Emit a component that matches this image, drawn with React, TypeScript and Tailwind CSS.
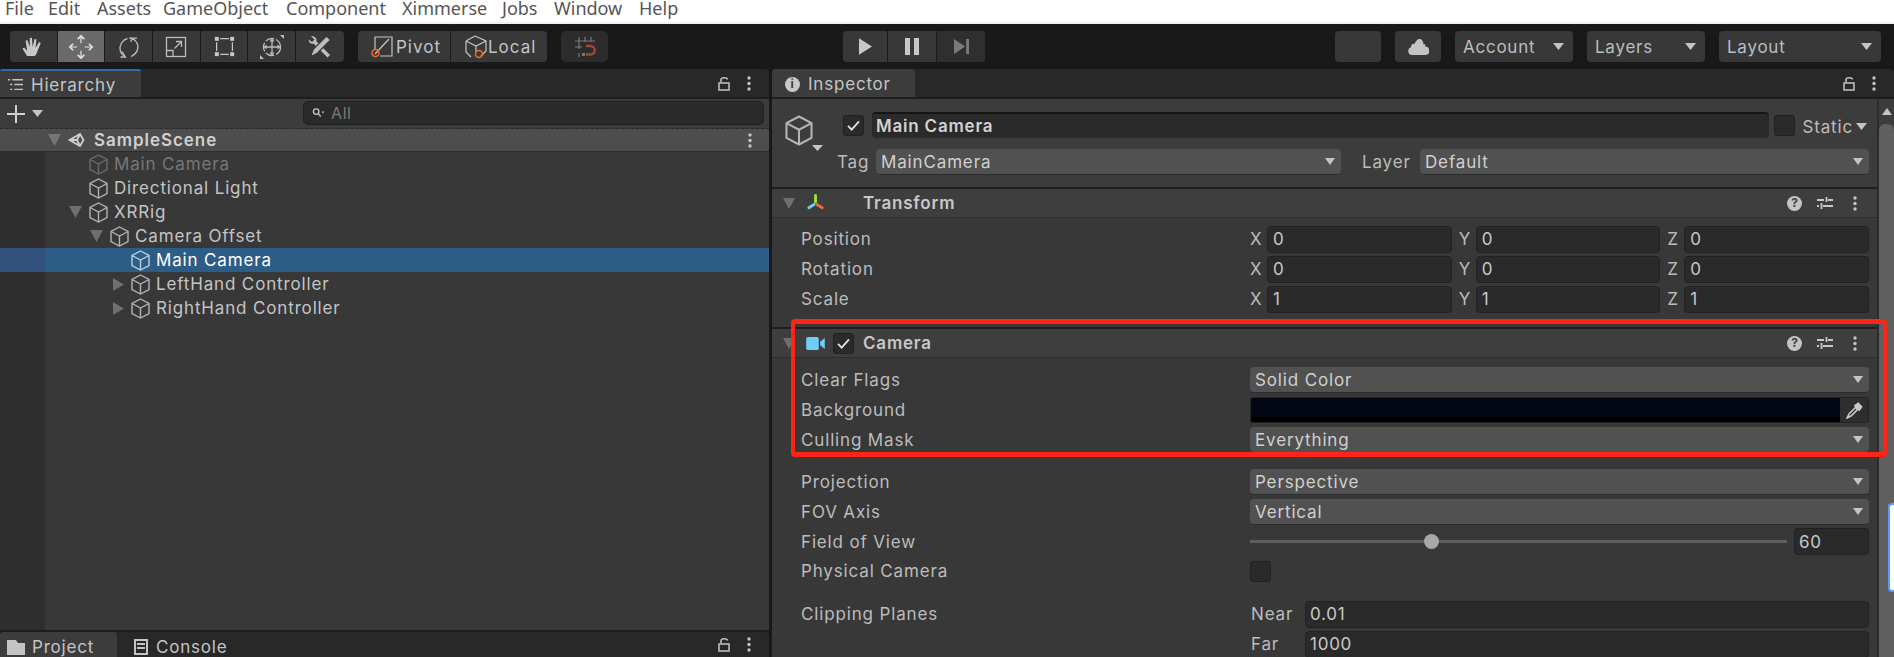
import type { ReactNode } from "react";

const MENU = [
  { label: "File", width: "w-[43px]" },
  { label: "Edit", width: "w-[49px]" },
  { label: "Assets", width: "w-[66px]" },
  { label: "GameObject", width: "w-[123px]" },
  { label: "Component", width: "w-[116px]" },
  { label: "Ximmerse", width: "w-[100px]" },
  { label: "Jobs", width: "w-[52px]" },
  { label: "Window", width: "w-[85px]" },
  { label: "Help", width: "w-[60px]" },
];

const Cube = ({ className = "w-[19px] h-[21px] text-[#b4b4b4]" }: { className?: string }) => (
  <svg viewBox="0 0 19 21" fill="none" stroke="currentColor" strokeWidth="1.4" className={className}>
    <path d="M9.5 1 18 5.5v10L9.5 20 1 15.5v-10L9.5 1Z" />
    <path d="M1 5.5 9.5 10 18 5.5M9.5 10v10" />
  </svg>
);

const Triangle = ({ dir = "down", className = "" }: { dir?: "down" | "right"; className?: string }) => (
  <svg viewBox="0 0 12 12" preserveAspectRatio="none" className={className} fill="currentColor">
    {dir === "down" ? <path d="M0 0h12L6 12Z" /> : <path d="M0 0v12l12-6Z" />}
  </svg>
);

const Lock = () => (
  <svg viewBox="0 0 12 15" className="w-[12px] h-[15px] text-[#c4c4c4]" fill="none" stroke="currentColor" strokeWidth="1.5">
    <path d="M3 6V3.5C3 1 9.5 1 9.5 3.5" />
    <rect x="1" y="7" width="10" height="7" />
  </svg>
);

const Dots = () => (
  <svg viewBox="0 0 4 15" className="w-[4px] h-[15px] text-[#c4c4c4]" fill="currentColor">
    <circle cx="2" cy="2" r="1.7" />
    <circle cx="2" cy="7.5" r="1.7" />
    <circle cx="2" cy="13" r="1.7" />
  </svg>
);

const Check = () => (
  <svg viewBox="0 0 14 12" className="w-[13px] h-[11px] text-[#e0e0e0]" fill="none" stroke="currentColor" strokeWidth="2">
    <path d="M1 6.5 5 10.5 13 1.5" />
  </svg>
);

const Checkbox = ({ checked = false, className = "" }: { checked?: boolean; className?: string }) => (
  <div className={`w-[21px] h-[21px] shrink-0 rounded-[3px] bg-[#2a2a2a] border border-[#212121] flex items-center justify-center ${className}`}>
    {checked && <Check />}
  </div>
);

const ToolButton = ({ children, active, last }: { children: ReactNode; active?: boolean; last?: boolean }) => (
  <div className={`w-[47.7px] h-full flex items-center justify-center ${active ? "bg-[#6a6a6a]" : ""} ${last ? "" : "border-r border-[#191919]"}`}>
    {children}
  </div>
);

const ToolIcon = ({ children }: { children: ReactNode }) => (
  <svg viewBox="0 0 24 24" className="w-[24px] h-[24px] text-[#bdbdbd]" fill="none" stroke="currentColor" strokeWidth="1.3">
    {children}
  </svg>
);

const TopDropdown = ({ label, width }: { label: string; width: string }) => (
  <div className={`${width} h-[31px] rounded-[4px] bg-[#383838] flex items-center justify-between pl-[8px] pr-[9px] text-[17px] tracking-[0.75px] text-[#bdbdbd]`}>
    <span className="pt-[2px]">{label}</span>
    <Triangle className="w-[11px] h-[7px] text-[#c4c4c4]" />
  </div>
);

const TreeRow = ({
  label,
  indent,
  arrow,
  selected,
  dim,
}: {
  label: string;
  indent: string;
  arrow?: "down" | "right";
  selected?: boolean;
  dim?: boolean;
}) => (
  <div className={`relative h-[24px] flex items-center ${indent} ${selected ? "bg-[#2c5d87] text-white" : dim ? "text-[#777777]" : "text-[#c4c4c4]"}`}>
    {selected && <div className="absolute left-0 top-0 w-[45px] h-full bg-[#34527e]" />}
    {arrow === "down" && <Triangle className="w-[13px] h-[12px] mr-[7px] -ml-[20px] text-[#6f6f6f]" />}
    {arrow === "right" && <Triangle dir="right" className="w-[11px] h-[13px] mr-[7px] -ml-[18px] text-[#6f6f6f]" />}
    <Cube className={`relative w-[19px] h-[21px] mr-[6px] ${selected ? "text-[#bcd0e0]" : dim ? "text-[#6b6b6b]" : "text-[#b4b4b4]"}`} />
    <span className="relative text-[17px] tracking-[0.85px] leading-none">{label}</span>
  </div>
);

const Field = ({ axis, value }: { axis: string; value: string }) => (
  <div className="flex-1 flex items-center min-w-0">
    <span className="w-[17px] shrink-0 pt-[2px] text-[17px]">{axis}</span>
    <div className="flex-1 h-[27px] rounded-[4px] bg-[#2a2a2a] border border-[#212121] flex items-center pl-[5px] pt-[2px] text-[#c8c8c8] text-[17px] tracking-[0.75px]">
      {value}
    </div>
  </div>
);

const Dropdown = ({ value, className = "" }: { value: string; className?: string }) => (
  <div className={`h-[26px] rounded-[4px] bg-[#515151] border-b border-[#2c2c2c] flex items-center justify-between pl-[5px] pr-[4px] text-[17px] tracking-[0.85px] text-[#d0d0d0] ${className}`}>
    <span className="pt-[2px]">{value}</span>
    <Triangle className="w-[10px] h-[7px] text-[#c4c4c4] mr-[2px]" />
  </div>
);

const Row = ({ label, height = "h-[30px]", children }: { label: string; height?: string; children?: ReactNode }) => (
  <div className={`${height} flex items-center pl-[29px] pr-[8px]`}>
    <span className="w-[449px] shrink-0 pt-[2px] text-[17px] tracking-[0.85px] text-[#bcbcbc]">{label}</span>
    <div className="flex-1 flex items-center min-w-0">{children}</div>
  </div>
);

const ComponentHeader = ({ icon, checkbox, title }: { icon: ReactNode; checkbox?: boolean; title: string }) => (
  <div className="h-[31px] border-t-2 border-[#1f1f1f] bg-[#3e3e3e] border-b border-b-[#2e2e2e] flex items-center pl-[11px] pr-[20px]">
    <Triangle className="w-[12px] h-[11px] text-[#6f6f6f] mr-[11px]" />
    <div className="w-[19px] flex justify-center">{icon}</div>
    {checkbox ? <Checkbox checked className="ml-[8px] mr-[9px]" /> : <div className="w-[38px]" />}
    <span className="pt-[2px] text-[17px] font-semibold tracking-[0.8px] text-[#c8c8c8]">{title}</span>
    <div className="ml-auto flex items-center">
      <div className="w-[15px] h-[15px] rounded-full bg-[#c4c4c4] text-[#3e3e3e] text-[12px] font-bold flex items-center justify-center">?</div>
      <svg viewBox="0 0 16 14" className="ml-[15px] w-[16px] h-[14px] text-[#c8c8c8]" fill="none" stroke="currentColor" strokeWidth="1.8">
        <path d="M0 4h7M11 4h5M9.5 1v5M0 10h2M6 10h10M4.5 7v6" />
      </svg>
      <div className="ml-[20px] flex">
        <Dots />
      </div>
    </div>
  </div>
);

const TabBar = ({ children, className = "" }: { children: ReactNode; className?: string }) => (
  <div className={`h-[28px] bg-[#282828] rounded-t-[4px] flex items-stretch ${className}`}>
    {children}
    <div className="ml-auto flex items-center gap-[17px] pr-[18px]">
      <Lock />
      <Dots />
    </div>
  </div>
);

const NumberInput = ({ value, className = "flex-1" }: { value: string; className?: string }) => (
  <div className={`${className} h-[27px] rounded-[4px] bg-[#2a2a2a] border border-[#212121] flex items-center pl-[4px] pt-[2px] text-[17px] tracking-[0.75px] text-[#c8c8c8]`}>
    {value}
  </div>
);

export default function App() {
  return (
    <div className="w-[1894px] h-[657px] overflow-hidden relative bg-[#191919] font-['Inter',sans-serif]">
      {/* MENU */}
      <div className="h-[24px] bg-white border-b-2 border-[#f0f0f0] flex items-start pl-[5px]">
        {MENU.map((m) => (
          <span key={m.label} className={`${m.width} shrink-0 font-['Noto_Sans',sans-serif] text-[18px] leading-[16px] text-[#555555]`}>
            {m.label}
          </span>
        ))}
      </div>

      {/* TOOLBAR */}
      <div className="h-[45px] flex items-center pl-[10px] pr-[13px]">
        <div className="h-[31px] rounded-[4px] bg-[#383838] overflow-hidden flex w-[334px]">
          <ToolButton>
            <svg viewBox="0 0 24 24" className="w-[24px] h-[24px] text-[#c8c8c8]" fill="currentColor">
              <path d="M6 21 1.5 13.5l1.6-1 3 3.4L4.6 5.5l2-.3 2 7L8.800 3l2.200-.2.600 9.200L13.500 4l2 .4-1 8.600 3.500-6 1.800.9-3.300 8.100c-.6 2-1.500 4.100-3 5.100Z" />
            </svg>
          </ToolButton>
          <ToolButton active>
            <svg viewBox="0 0 28 28" className="w-[26px] h-[26px] text-[#e4e4e4]" fill="none" stroke="currentColor" strokeWidth="1.3">
              <path d="M14 2v8M14 18v8M2 14h8M18 14h8" />
              <path d="M10.500 5.500 14 2l3.500 3.500M10.500 22.500 14 26l3.500-3.500M5.500 10.500 2 14l3.500 3.500M22.500 10.500 26 14l-3.500 3.500" strokeWidth="1.800" />
            </svg>
          </ToolButton>
          <ToolButton>
            <ToolIcon>
              <path d="M8 21.500C3 19 1.500 13 4.500 8 6 5.500 8.500 4 10.500 3.500" />
              <path d="M13.500 3C19 4.500 22 9 20.500 14.500c-.8 3-3 5.500-6.500 7" />
              <path d="M12 3.200h8M16 3.200l-2.500 3.500" />
              <path d="M5 16.500l3.500 5.500h-5" />
            </ToolIcon>
          </ToolButton>
          <ToolButton>
            <ToolIcon>
              <rect x="2.500" y="2.500" width="19" height="19" />
              <path d="M2.500 15.500h6.500v6M10.500 13.500l7-7M12 6.500h5.500v5.500" />
            </ToolIcon>
          </ToolButton>
          <ToolButton>
            <svg viewBox="0 0 24 24" className="w-[21px] h-[21px] text-[#c8c8c8]" fill="none" stroke="currentColor" strokeWidth="1.400">
              <path d="M7 3h10M7 21h10M3 7v10M21 7v10" />
              <g fill="currentColor" stroke="none">
                <rect x="1" y="1" width="4.500" height="4.500" />
                <rect x="18.500" y="1" width="4.500" height="4.500" />
                <rect x="1" y="18.500" width="4.500" height="4.500" />
                <rect x="18.500" y="18.500" width="4.500" height="4.500" />
              </g>
            </svg>
          </ToolButton>
          <ToolButton>
            <ToolIcon>
              <circle cx="12" cy="12" r="8.500" strokeDasharray="9 2" />
              <path d="M12 5v14M5 12h14" />
              <path d="M12 3.500l2.500 3h-5ZM12 20.500l2.500-3h-5ZM3.500 12l3-2.500v5ZM20.500 12l-3-2.500v5Z" fill="currentColor" stroke="none" />
              <path d="M0 24v-4l4 4ZM24 0v4l-4-4Z" fill="currentColor" stroke="none" />
            </ToolIcon>
          </ToolButton>
          <ToolButton last>
            <svg viewBox="0 0 24 24" className="w-[24px] h-[24px] text-[#bdbdbd]" fill="currentColor">
              <path d="M3 1.500c2.500-1 5 .5 5.500 3 .1.700 0 1.200-.2 1.700L22 20l-2.500 2.500L5.800 8.800C3 9.500.6 7.500.7 4.500L4 7l2.500-2.500Z" />
              <path d="M18.500 1 22.500 5 9.500 18 4 21l-1-1 2.500-6Z" stroke="#383838" strokeWidth="1.200" />
            </svg>
          </ToolButton>
        </div>

        <div className="ml-[14px] h-[31px] w-[189px] rounded-[4px] bg-[#383838] flex text-[17px] tracking-[1px] text-[#c4c4c4]">
          <div className="w-[93px] flex items-center pl-[13px] border-r border-[#191919]">
            <svg viewBox="0 0 22 22" className="w-[22px] h-[22px] mr-[3px]" fill="none" strokeWidth="1.200">
              <path d="M4 14V1h17v19H9M4 18 18 3" stroke="#c4c4c4" />
              <circle cx="4.500" cy="17" r="3.500" stroke="#ef6a2e" strokeWidth="1.500" />
            </svg>
            <span className="pt-[2px]">Pivot</span>
          </div>
          <div className="flex-1 flex items-center pl-[13px]">
            <svg viewBox="0 0 24 24" className="w-[24px] h-[24px]" fill="none" strokeWidth="1.200">
              <path d="M11 1 22 6v10l-5 5M2 6l9-5M2 6v11l5 5M2 6l10 5 10-5M12 11v6" stroke="#c4c4c4" />
              <circle cx="15" cy="19" r="3.500" stroke="#ef6a2e" strokeWidth="1.500" />
            </svg>
            <span className="pt-[2px]">Local</span>
          </div>
        </div>

        <div className="ml-[14px] h-[31px] w-[47px] rounded-[5px] bg-[#2c2c2c] flex items-center justify-center">
          <svg viewBox="0 0 22 22" className="w-[22px] h-[22px]" fill="none" strokeWidth="1.200">
            <path d="M5 1v12M11 1v5M17 1v5M1 5h20M1 11h7M5 17v4" stroke="#777777" />
            <path d="M12 10h4.500a4.200 4.200 0 0 1 0 8.500H12" stroke="#a5472a" strokeWidth="2.400" />
            <path d="M8 17h3v3H8Z" fill="#777777" stroke="none" />
          </svg>
        </div>

        <div className="ml-[235px] h-[31px] w-[142px] rounded-[4px] bg-[#383838] flex">
          <div className="w-[45px] border-r border-[#191919] flex items-center justify-center">
            <svg viewBox="0 0 14 18" className="w-[13px] h-[17px] text-[#c8c8c8]" fill="currentColor">
              <path d="M0 0l14 9-14 9Z" />
            </svg>
          </div>
          <div className="w-[49px] border-r border-[#191919] flex items-center justify-center gap-[4px]">
            <div className="w-[5px] h-[17px] bg-[#c8c8c8]" />
            <div className="w-[5px] h-[17px] bg-[#c8c8c8]" />
          </div>
          <div className="flex-1 flex items-center justify-center bg-[#2f2f2f] rounded-r-[4px]">
            <svg viewBox="0 0 16 16" className="w-[15px] h-[15px] text-[#7a7a7a]" fill="currentColor">
              <path d="M0 0l12 8-12 8ZM13 0h3v16h-3Z" />
            </svg>
          </div>
        </div>

        <div className="ml-auto flex items-center">
          <div className="w-[46px] h-[31px] rounded-[4px] bg-[#383838]" />
          <div className="ml-[14px] w-[46px] h-[31px] rounded-[4px] bg-[#383838] flex items-center justify-center">
            <svg viewBox="0 0 21 16" className="w-[21px] h-[16px] text-[#c4c4c4]" fill="currentColor">
              <path d="M4 16a4 4 0 0 1-1-7.800C3.300 5 5 4.500 6.500 5 7.500 2 9.500 0 11.500 0c2.500 0 4 2.500 4 5.500 0-.5 1-.5 1.500 0 .5.500.5 1.500 0 2A4.300 4.300 0 0 1 18 16Z" />
            </svg>
          </div>
          <TopDropdown label="Account" width="ml-[14px] w-[118px]" />
          <TopDropdown label="Layers" width="ml-[14px] w-[118px]" />
          <TopDropdown label="Layout" width="ml-[14px] w-[162px]" />
        </div>
      </div>

      {/* PANELS */}
      <div className="flex h-[588px]">
        {/* LEFT COLUMN */}
        <div className="w-[769px] shrink-0 flex flex-col">
          <TabBar>
            <div className="w-[141px] bg-[#3c3c3c] border-t-2 border-[#2f6ba5] flex items-center pl-[8px] text-[17px] tracking-[0.8px] text-[#c4c4c4] rounded-t-[2px]">
              <svg viewBox="0 0 14 12" className="w-[15px] h-[13px] mr-[8px] text-[#c4c4c4]" fill="none" stroke="currentColor" strokeWidth="1.300">
                <path d="M0 1.500h2M4 1.500h10M2 6h2M6 6h8M2 10.500h2M6 10.500h8" />
              </svg>
              <span className="pt-[3px]">Hierarchy</span>
            </div>
          </TabBar>
          <div className="h-[2px] bg-[#1e1e1e]" />
          <div className="h-[30px] bg-[#3c3c3c] flex items-center pr-[5px] border-b border-dashed border-[#2a2a2a]">
            <svg viewBox="0 0 18 18" className="ml-[7px] w-[18px] h-[18px] text-[#d0d0d0]" fill="none" stroke="currentColor" strokeWidth="2">
              <path d="M9 0v18M0 9h18" />
            </svg>
            <Triangle className="ml-[7px] w-[11px] h-[7px] text-[#c4c4c4]" />
            <div className="ml-[260px] flex-1 h-[24px] -mt-[2px] rounded-[5px] bg-[#2a2a2a] border border-[#212121] flex items-center pl-[7px] text-[16px] tracking-[0.6px] text-[#7b7b7b]">
              <svg viewBox="0 0 14 12" className="w-[14px] h-[11px] mr-[6px] text-[#c4c4c4]" fill="none" stroke="currentColor" strokeWidth="1.500">
                <circle cx="5" cy="5" r="3" />
                <path d="M7.500 7.500 10 10.500" />
                <path d="M11 5h3l-1.500 2Z" fill="currentColor" stroke="none" />
              </svg>
              All
            </div>
          </div>
          <div className="h-[23px] bg-[#4d4d4d] flex items-center pl-[48px] pr-[17px] border-b border-[#2c2c2c]">
            <Triangle className="w-[13px] h-[12px] text-[#757575]" />
            <svg viewBox="0 0 18 18" className="ml-[7px] w-[18px] h-[18px] text-[#d0d0d0]" fill="none" stroke="currentColor" strokeWidth="1.800">
              <path d="M1.500 9 12 3l3.500 6-3.500 6ZM12 3l-3 6 3 6M9 9H1.500" />
            </svg>
            <span className="ml-[8px] pt-[2px] text-[17px] font-semibold tracking-[0.95px] text-[#d0d0d0]">SampleScene</span>
            <div className="ml-auto flex">
              <Dots />
            </div>
          </div>
          <div className="flex-1 bg-[#383838] relative">
            <div className="absolute left-0 top-0 bottom-0 w-[45px] bg-[#2e2e2e]" />
            <div className="relative">
              <TreeRow label="Main Camera" indent="pl-[89px]" dim />
              <TreeRow label="Directional Light" indent="pl-[89px]" />
              <TreeRow label="XRRig" indent="pl-[89px]" arrow="down" />
              <TreeRow label="Camera Offset" indent="pl-[110px]" arrow="down" />
              <TreeRow label="Main Camera" indent="pl-[131px]" selected />
              <TreeRow label="LeftHand Controller" indent="pl-[131px]" arrow="right" />
              <TreeRow label="RightHand Controller" indent="pl-[131px]" arrow="right" />
            </div>
          </div>
          <div className="h-[2px] bg-[#1e1e1e]" />
          <TabBar className="!h-[25px]">
            <div className="w-[117px] bg-[#3c3c3c] flex items-center pl-[7px] pt-[5px] text-[17px] tracking-[0.8px] text-[#c4c4c4] rounded-t-[3px]">
              <svg viewBox="0 0 18 15" className="w-[18px] h-[15px] mr-[7px] text-[#c4c4c4]" fill="currentColor">
                <path d="M0 0h9l2 3h7v12H0Z" />
              </svg>
              <span className="pt-[2px]">Project</span>
            </div>
            <div className="flex items-center pl-[17px] pt-[5px] text-[17px] tracking-[0.8px] text-[#c4c4c4]">
              <svg viewBox="0 0 14 16" className="w-[14px] h-[16px] mr-[8px] text-[#c4c4c4]" fill="none" stroke="currentColor" strokeWidth="2">
                <rect x="1" y="1" width="12" height="14" />
                <path d="M3 5h8M3 9h8" />
              </svg>
              <span className="pt-[2px]">Console</span>
            </div>
          </TabBar>
        </div>

        <div className="w-[3px] shrink-0" />

        {/* INSPECTOR */}
        <div className="flex-1 flex flex-col min-w-0">
          <TabBar className="rounded-tl-[4px]">
            <div className="w-[143px] bg-[#3c3c3c] flex items-center pl-[13px] text-[17px] tracking-[0.8px] text-[#c4c4c4] rounded-t-[4px]">
              <div className="w-[15px] h-[15px] mr-[8px] mt-[2px] rounded-full bg-[#c8c8c8] text-[#3c3c3c] text-[12px] font-bold flex items-center justify-center">i</div>
              <span className="pt-[4px]">Inspector</span>
            </div>
          </TabBar>
          <div className="h-[2px] bg-[#1e1e1e]" />
          <div className="flex-1 flex min-h-0">
            <div className="flex-1 bg-[#383838] min-w-0 overflow-hidden border-r-2 border-[#2c2c2c]">
              {/* OBJECT HEADER */}
              <div className="h-[88px] bg-[#3c3c3c] flex flex-col">
                <div className="h-[49px] flex items-start">
                  <div className="relative w-[71px] shrink-0 pl-[13px] pt-[16px]">
                    <Cube className="w-[28px] h-[31px] text-[#b4b4b4]" />
                    <Triangle className="absolute left-[40px] top-[46px] w-[11px] h-[6px] text-[#c4c4c4]" />
                  </div>
                  <Checkbox checked className="mt-[16px]" />
                  <div className="ml-[8px] mt-[13px] flex-1 h-[26px] bg-[#2a2a2a] rounded-[4px] border-t-2 border-[#151515] flex items-center pl-[4px] pt-[1px] text-[17px] font-semibold tracking-[0.8px] text-[#d2d2d2]">
                    Main Camera
                  </div>
                  <Checkbox className="ml-[5px] mt-[16px]" />
                  <span className="ml-[7px] mt-[16px] text-[17px] tracking-[0.85px] text-[#bcbcbc]">Static</span>
                  <Triangle className="ml-[3px] mt-[24px] w-[11px] h-[7px] text-[#c4c4c4]" />
                  <div className="w-[10px]" />
                </div>
                <div className="flex items-center pr-[8px] text-[17px] tracking-[0.85px] text-[#bcbcbc]">
                  <span className="w-[104px] shrink-0 pl-[65px] pt-[2px]">Tag</span>
                  <Dropdown value="MainCamera" className="w-[465px]" />
                  <span className="w-[79px] shrink-0 pl-[21px] pt-[2px]">Layer</span>
                  <Dropdown value="Default" className="flex-1" />
                </div>
              </div>

              {/* TRANSFORM */}
              <ComponentHeader
                title="Transform"
                icon={
                  <svg viewBox="0 0 20 20" className="w-[20px] h-[20px]" fill="none" strokeWidth="3" strokeLinecap="round">
                    <path d="M10 2v7" stroke="#a4e030" />
                    <path d="M11.500 11.500 17 15" stroke="#ee6a3a" />
                    <path d="M8.500 11.500 3 15" stroke="#6ccbf5" />
                  </svg>
                }
              />
              <div className="pt-[6px] pb-[13px]">
                {[
                  { label: "Position", x: "0", y: "0", z: "0" },
                  { label: "Rotation", x: "0", y: "0", z: "0" },
                  { label: "Scale", x: "1", y: "1", z: "1" },
                ].map((r) => (
                  <Row key={r.label} label={r.label}>
                    <div className="flex-1 flex gap-[7px] text-[#bcbcbc]">
                      <Field axis="X" value={r.x} />
                      <Field axis="Y" value={r.y} />
                      <Field axis="Z" value={r.z} />
                    </div>
                  </Row>
                ))}
              </div>

              {/* CAMERA */}
              <ComponentHeader
                title="Camera"
                checkbox
                icon={
                  <svg viewBox="0 0 20 14" className="w-[19px] h-[13px]" fill="#70cdf8">
                    <rect x="0" y="0" width="13.500" height="14" rx="2" />
                    <path d="M15 5l5-4v12l-5-4Z" />
                  </svg>
                }
              />
              <div className="pt-[7px]">
                <Row label="Clear Flags">
                  <Dropdown value="Solid Color" className="flex-1" />
                </Row>
                <Row label="Background">
                  <div className="flex-1 h-[26px] rounded-[3px] bg-[#2e2e2e] border border-[#232323] flex overflow-hidden">
                    <div className="flex-1 bg-[#020713] border-b-[5px] border-black" />
                    <div className="w-[28px] flex items-center justify-center">
                      <svg viewBox="0 0 16 16" className="w-[17px] h-[17px] text-[#c8c8c8]" fill="none" stroke="currentColor">
                        <path d="M1 15 3 11l6-6 2 2-6 6Z" strokeWidth="1.500" />
                        <path d="M8 3.500 11.500 1 15 4.500 12.500 8Z" fill="currentColor" />
                      </svg>
                    </div>
                  </div>
                </Row>
                <Row label="Culling Mask">
                  <Dropdown value="Everything" className="flex-1" />
                </Row>
              </div>
              <div className="pt-[12px]">
                <Row label="Projection">
                  <Dropdown value="Perspective" className="flex-1" />
                </Row>
                <Row label="FOV Axis">
                  <Dropdown value="Vertical" className="flex-1" />
                </Row>
                <Row label="Field of View" height="h-[29px]">
                  <div className="flex-1 h-[3px] bg-[#5e5e5e] relative">
                    <div className="absolute left-[174px] -top-[6px] w-[15px] h-[15px] rounded-full bg-[#a8a8a8]" />
                  </div>
                  <NumberInput value="60" className="ml-[7px] w-[75px]" />
                </Row>
                <Row label="Physical Camera">
                  <Checkbox />
                </Row>
                <div className="h-[13px]" />
                <Row label="Clipping Planes">
                  <span className="w-[55px] shrink-0 pt-[2px] text-[17px] tracking-[0.85px] text-[#bcbcbc] pl-[1px]">Near</span>
                  <NumberInput value="0.01" />
                </Row>
                <Row label="">
                  <span className="w-[55px] shrink-0 pt-[2px] text-[17px] tracking-[0.85px] text-[#bcbcbc] pl-[1px]">Far</span>
                  <NumberInput value="1000" />
                </Row>
              </div>
            </div>
            {/* SCROLLBAR */}
            <div className="w-[15px] shrink-0 bg-[#3c3c3c] flex flex-col">
              <div className="h-[25px] flex items-center justify-center">
                <svg viewBox="0 0 10 7" className="w-[10px] h-[7px] text-[#c4c4c4]" fill="currentColor">
                  <path d="M5 0l5 7H0Z" />
                </svg>
              </div>
              <div className="flex-1 bg-[#5f5f5f] rounded-t-[6px]" />
            </div>
          </div>
        </div>
      </div>

      {/* RED ANNOTATION */}
      <div className="absolute left-[791px] top-[319px] w-[1096px] h-[138px] border-x-4 border-y-[5px] border-[#ff2416] rounded-[4px]" />
      {/* EDGE WIDGET */}
      <div className="absolute left-[1888px] top-[503px] w-[8px] h-[89px] bg-white border-2 border-[#5b9bff] rounded-l-[4px]" />
    </div>
  );
}
